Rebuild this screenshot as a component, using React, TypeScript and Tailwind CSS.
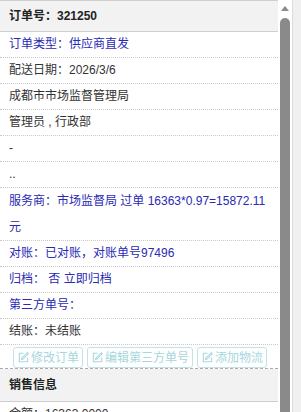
import React from 'react';

const font = { fontFamily: '"Liberation Sans", "Noto Sans CJK SC", sans-serif' };

const PenIcon = () => (
  <svg width="13" height="13" viewBox="0 0 14 14" fill="none" stroke="currentColor" strokeWidth="1.1">
    <path d="M7 2.5H2.5v9h9V7" />
    <path d="M11 1.8l1.2 1.2L6.5 8.7 4.8 9.2l.5-1.7z" />
  </svg>
);

const Row = ({ children, blue }: { children: React.ReactNode; blue?: boolean }) => (
  <div
    className={`px-[9px] text-[12px] leading-[25px] border-b border-dotted border-[#c8c8c8] ${
      blue ? 'text-[#2a2ab4]' : 'text-[#333]'
    }`}
  >
    {children}
  </div>
);

const Btn = ({ label }: { label: string }) => (
  <button className="flex items-center gap-[1px] h-[21px] px-[3px] border border-[#c4e3e8] rounded-[3px] text-[#a6d6de] text-[12px] leading-none bg-white">
    <PenIcon />
    <span>{label}</span>
  </button>
);

export default function App() {
  return (
    <div className="flex w-[301px] h-[412px] overflow-hidden bg-white" style={font}>
      {/* main panel */}
      <div className="w-[278px] shrink-0 flex flex-col">
        <div className="h-[32px] shrink-0 border-t border-b border-[#cfcfcf] bg-[#f2f2f2] px-[9px] text-[12px] font-bold leading-[30px] text-[#222]">
          订单号：321250
        </div>
        <Row blue>订单类型：供应商直发</Row>
        <Row>配送日期：2026/3/6</Row>
        <Row>成都市市场监督管理局</Row>
        <Row>管理员 , 行政部</Row>
        <Row>-</Row>
        <Row>..</Row>
        <Row blue>
          <div className="leading-[26px]">服务商：市场监督局 过单 16363*0.97=15872.11元</div>
        </Row>
        <Row blue>对账：已对账，对账单号97496</Row>
        <Row blue>归档： 否 立即归档</Row>
        <Row blue>第三方单号：</Row>
        <Row>结账：未结账</Row>
        <div className="flex gap-[4px] pl-[13px] pt-[2px] h-[26px] border-b border-dashed border-[#aaa]">
          <Btn label="修改订单" />
          <Btn label="编辑第三方单号" />
          <Btn label="添加物流" />
        </div>
        <div className="h-[33px] shrink-0 border-b border-[#cfcfcf] bg-[#f2f2f2] px-[9px] text-[12px] font-bold leading-[32px] text-[#222]">
          销售信息
        </div>
        <div className="px-[9px] text-[12px] leading-[25px] text-[#333]">金额：16363.0000</div>
      </div>
      {/* scrollbar */}
      <div className="w-[14px] shrink-0 flex flex-col items-center pt-[6px]">
        <div className="w-0 h-0 border-l-[4px] border-r-[4px] border-b-[5px] border-l-transparent border-r-transparent border-b-[#8a8a8a]" />
        <div className="mt-[7px] w-[10px] flex-1 rounded-t-[5px] bg-[#8a8a8a]" />
      </div>
      {/* side strip */}
      <div className="flex-1 border-l border-[#dcdcdc] bg-[#f0f0f0]" />
    </div>
  );
}
